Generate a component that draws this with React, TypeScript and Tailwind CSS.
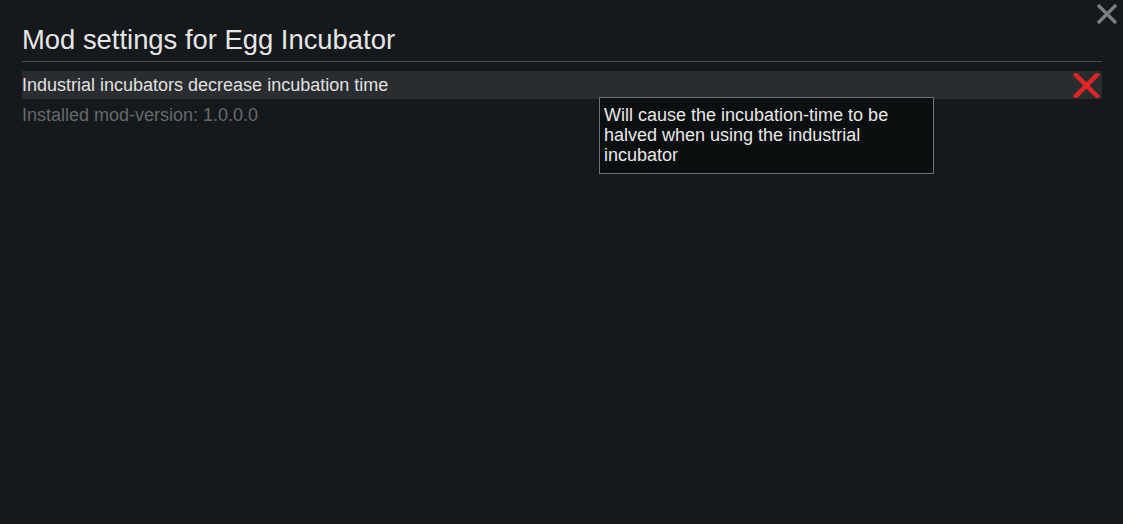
import React from "react";

const App: React.FC = () => {
  return (
    <div
      className="relative h-[524px] w-[1123px] overflow-hidden bg-[#16191c] text-[#e0e0e0]"
      style={{ fontFamily: '"Liberation Sans", Arial, sans-serif' }}
    >
      {/* close button */}
      <button className="absolute right-[5px] top-[3px] h-[22px] w-[22px]">
        <svg viewBox="0 0 22 22" className="h-[22px] w-[22px]">
          <path d="M2 2 L20 20 M20 2 L2 20" stroke="#7d8083" strokeWidth="3.2" />
        </svg>
      </button>

      <div className="flex flex-col px-[22px] pr-[21px] pt-[24px]">
        <h1 className="text-[27.4px] leading-[32px] text-[#e6e6e6]">Mod settings for Egg Incubator</h1>
        <div className="mt-[5px] h-px bg-[#4b4e51]" />

        <div className="relative mt-[9px] flex h-[28px] items-center justify-between bg-[#2a2d30]">
          <span className="text-[18px] leading-[28px]">Industrial incubators decrease incubation time</span>
          <svg viewBox="0 0 27 25" className="mr-[2px] h-[25px] w-[27px]">
            <path d="M3 2 L24 23 M24 2 L3 23" stroke="#e02424" strokeWidth="4.5" strokeLinecap="square" />
          </svg>

          {/* tooltip */}
          <div className="absolute left-[577px] top-[26px] z-10 w-[335px] border border-[#6c7276] bg-[#0c0f10] px-[4px] pb-[8px] pt-[7px] text-[18px] leading-[20px] text-[#e8e8e8]">
            Will cause the incubation-time to be halved when using the industrial incubator
          </div>
        </div>

        <p className="mt-[3px] text-[18px] leading-[26px] text-[#66696c]">Installed mod-version: 1.0.0.0</p>
      </div>
    </div>
  );
};

export default App;
